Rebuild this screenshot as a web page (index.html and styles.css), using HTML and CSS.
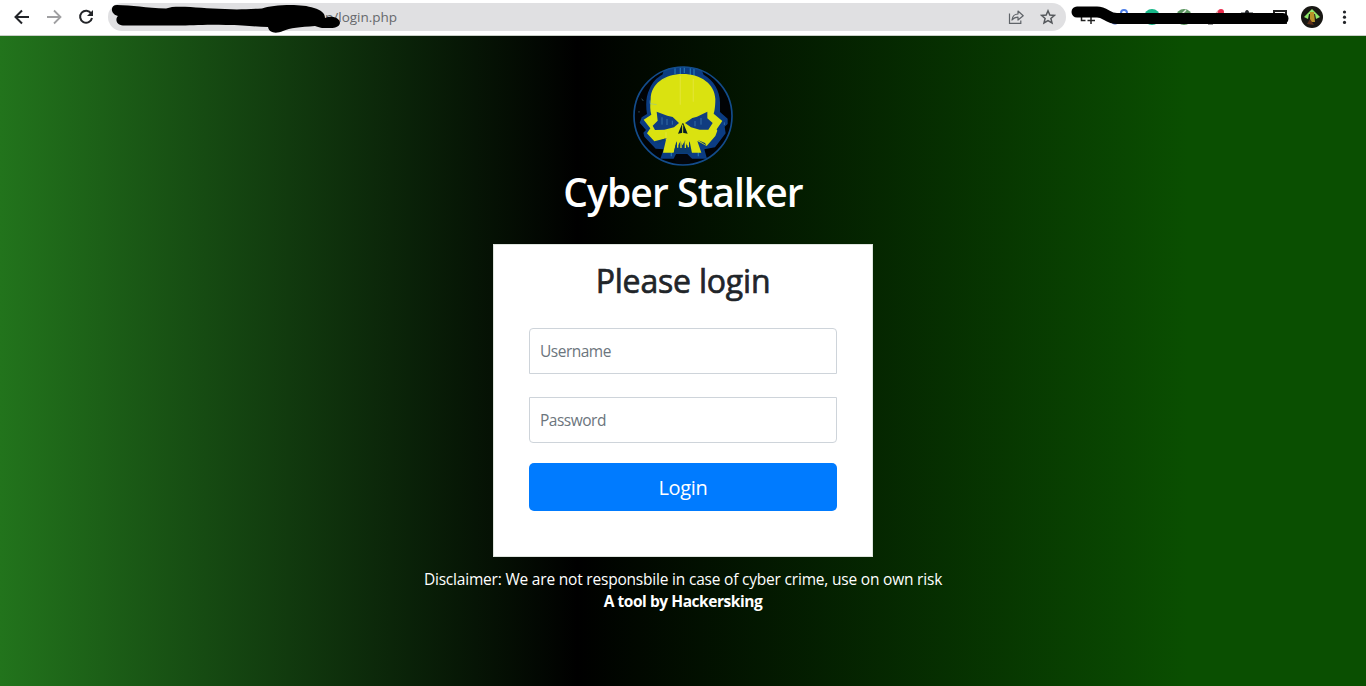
FILE: index.html
```html
<!DOCTYPE html>
<html lang="en">
<head>
<meta charset="utf-8">
<title>Cyber Stalker</title>
<link rel="stylesheet" href="styles.css">
</head>
<body>
<header class="toolbar">
  <nav class="nav">
    <svg width="16" height="16" viewBox="0 0 16 16"><path d="M15 8H2M8 1.5 1.5 8 8 14.5" fill="none" stroke="#222428" stroke-width="2"/></svg>
    <svg width="16" height="16" viewBox="0 0 16 16"><path d="M1 8h13M8 1.5 14.5 8 8 14.5" fill="none" stroke="#a0a0a2" stroke-width="1.8"/></svg>
    <svg width="16" height="16" viewBox="0 0 16 16"><path d="M13.2 4.5A6 6 0 1 0 14 9" fill="none" stroke="#222428" stroke-width="2"/><path d="M15 1v6H9z" fill="#222428"/></svg>
  </nav>
  <div class="address">
    <span class="url">n/login.php</span>
    <svg class="share" width="16" height="16" viewBox="0 0 16 16" fill="none" stroke="#5f6368" stroke-width="1.2"><path d="M1.5 4.5V14.3H12.8V11.5"/><path d="M4 11C4.5 7 7 5 10 5V2L15.2 6.8 10 11V8.2C7.5 8.2 5.6 9 4 11z" stroke-linejoin="round"/></svg>
    <svg width="16" height="16" viewBox="0 0 16 16"><path d="M8 1.8 9.8 6l4.6.4-3.5 3 1.1 4.5L8 11.5l-4 2.4 1.1-4.5-3.5-3L6.200 6z" fill="none" stroke="#55585c" stroke-width="1.5"/></svg>
  </div>
  <svg class="extensions" width="300" height="35" viewBox="1066 0 300 35">
    <path d="M1081.500 17v3.500h4M1091 16v8M1087.500 20.500h7.500" fill="none" stroke="#222" stroke-width="1.500"/>
    <circle cx="1124" cy="13" r="3" fill="none" stroke="#4c7ee8" stroke-width="2"/>
    <circle cx="1115" cy="21" r="3.500" fill="#3b5fc4"/>
    <circle cx="1152" cy="17" r="8" fill="#16b788"/>
    <circle cx="1184" cy="17" r="8" fill="#5b9660"/><path d="m1181 15 5-5" stroke="#e6eee4" stroke-width="1.500"/>
    <path d="m1214 15 4-5 3 2v4z" fill="#e8a0a4"/><circle cx="1221" cy="12" r="3" fill="#e92c4c"/><path d="M1208 24h5" stroke="#333"/>
    <path d="M1241 15v-2.500h4c0-3.500 4-3.500 4 0h4V15z" fill="#25282c"/>
    <path d="M1274 23V11h12v12z" fill="none" stroke="#222" stroke-width="2"/>
    <circle cx="1312" cy="17" r="11" fill="#181713"/>
    <path d="m1304 17 8-8 8 8-4 2-1-5h-6l-1 5z" fill="#8fea6c"/><path d="M1310 12h4l1 10h-5z" fill="#b89428"/><path d="m1307 24 3-5 4 6z" fill="#5c2f1a"/>
    <g fill="#222428"><circle cx="1344.500" cy="12" r="1.600"/><circle cx="1344.500" cy="17.200" r="1.600"/><circle cx="1344.500" cy="22.400" r="1.600"/></g>
  </svg>
  <svg class="marker" width="1366" height="36" viewBox="0 0 1366 36">
    <path d="M117 5C132 5 146 8 166 8.500L172 7C190 6 205 9 225 9C239 10 248 9 262 8.500C272 5 300 3 314 8C321 10 325 13 325 18C332 15 340 18 340 23C339 29 330 28 322 28C319 27 317 27 315 26C300 27 290 28 283 31C276 34 269 33 268 27C256 27 244 25 226 25C202 24 188 26 172 25.500H123C116 25 115 19 118 16C110 14 110 5 117 5Z"/>
    <path d="M1077 12h20c9 0 10 6.500 20 6.500h166" fill="none" stroke="#000" stroke-width="11" stroke-linecap="round"/>
  </svg>
</header>
<main class="page">
  <svg class="logo" width="100" height="100" viewBox="24 16 300 300">
    <defs><clipPath id="disc"><circle cx="174" cy="166" r="148"/></clipPath></defs>
    <circle cx="174" cy="166" r="147" fill="#010305"/>
    <g clip-path="url(#disc)">
      <path d="M122 14h102l12 28c30 16 50 50 49 86v26l23 20v16l-9 8 3 20-32 42-32 6 8 28H106l10-28-24-2-34-36-3-12 8-8-19-22 6-16 16-10c-4-24-4-54 8-76 8-20 22-34 38-42z" fill="#0b3c82"/>
      <path d="M146 294 153 280h34l14 14-12 18h-32z" fill="#02060c"/>
      <path d="M166 17v25M178 17v20M196 18v28M207 25v21M150 20v20M139 274v13M220 270v17" stroke="#2070ae" stroke-width="4"/>
    </g>
    <circle cx="174" cy="166" r="147" fill="none" stroke="#134c8b" stroke-width="5"/>
    <path d="M77 115C78 70 118 40 173 40s96 30 98 75c0 20-2 36-5 44l26 22-17 25 2 4-6 16-26 30-28-15 12 35h-33l-6-24-5 4-7-12-6 10-7-10-7 12-6-4-6 24h-32l10-43-36 9-22-24 10-15-20-26 23-15c-4-12-4-30-2-47z" fill="#dae210"/>
    <path d="M95 153 127 165 143 169 162 187 147 200 118 207 90 208 83 195 98 180zM247 153 216 168 202 172 180 187 198 200 224 207 250 207 263 187 247 173z" fill="#103c80"/>
    <path d="m172 188-13 31 14-3 15 3-13-31z" fill="#071e25"/>
    <path d="M173 192v27" stroke="#dae210" stroke-width="3"/>
    <path d="M127 231 99 249 94 243zM218 238 244 254 240 247zM146 278l8-36 7 19 6-21 6 19 7-20 7 20 7-17 7 36z" fill="#0b3b70"/>
    <path d="M158 247v14M168 242v20M181 242v20M190 247v13" stroke="#dae210" stroke-width="4"/>
    <path d="M166 45v87M205 54v69M123 215v22" stroke="#ece95c" stroke-width="4" opacity=".4"/>
    <path d="M75 119v10l20 3M111 170v22M126 175v18M142 180v12M210 181v16M228 172v20M50 114l5 7M42 151v5M298 185v8M115 57l8-4" fill="none" stroke="#68b4e0" stroke-width="3" opacity=".4"/>
  </svg>
  <h1 class="title">Cyber Stalker</h1>
  <form class="card">
    <h2 class="heading">Please login</h2>
    <input class="field field-top" type="text" placeholder="Username">
    <input class="field field-bottom" type="password" placeholder="Password">
    <button class="submit" type="button">Login</button>
  </form>
  <p class="disclaimer">Disclaimer: We are not responsbile in case of cyber crime, use on own risk</p>
  <p class="credit">A tool by Hackersking</p>
</main>
</body>
</html>
```
FILE: styles.css
```css
* { box-sizing: border-box; }
body {
  margin: 0;
  height: 686px;
  overflow: hidden;
  display: flex;
  flex-direction: column;
  font-family: "Open Sans", "Noto Sans", sans-serif;
}
svg { display: block; flex: none; }
.toolbar {
  position: relative;
  height: 36px;
  flex: none;
  display: flex;
  align-items: flex-start;
  background: #fff;
  border-bottom: 1px solid #c9d0c8;
}
.nav {
  width: 108px;
  flex: none;
  padding: 9px 0 0 14px;
  display: flex;
  gap: 16px;
}
.address {
  width: 958px;
  height: 28px;
  flex: none;
  margin-top: 3px;
  padding: 0 10px 0 217px;
  display: flex;
  align-items: center;
  gap: 16px;
  border-radius: 14px;
  background: #e0e0e2;
}
.url {
  flex: 1;
  color: #66696c;
  font-size: 13.5px;
  line-height: 28px;
}
.marker { position: absolute; left: 0; top: 0; }
.page {
  flex: 1;
  display: flex;
  flex-direction: column;
  align-items: center;
  padding-top: 30px;
  background: linear-gradient(90deg, #22741c 0%, #000 42.3%, #0a4f01 87%);
  color: #fff;
}
.title {
  margin: 2px 0 0;
  font-size: 39px;
  font-weight: 600;
  line-height: 48px;
  letter-spacing: -0.9px;
  white-space: nowrap;
}
.card {
  width: 380px;
  height: 313px;
  margin-top: 28px;
  padding: 17px 35px 0;
  display: flex;
  flex-direction: column;
  background: #fff;
  border: 1px solid #dfe5df;
}
.heading {
  margin: 0 0 28px;
  color: #212529;
  font-size: 32px;
  font-weight: 500;
  line-height: 38px;
  letter-spacing: -0.2px;
  text-align: center;
  -webkit-text-stroke: 0.7px #212529;
}
.field {
  width: 100%;
  height: 46px;
  margin: 0;
  padding: 10px;
  border: 1px solid #ced4da;
  background: #fff;
  font: 15.5px "Open Sans", "Noto Sans", sans-serif;
  letter-spacing: -0.5px;
}
.field::placeholder { color: #6c757d; opacity: 1; }
.field-top { border-radius: 4px 4px 0 0; margin-bottom: 23px; }
.field-bottom { border-radius: 0 0 4px 4px; margin-bottom: 20px; }
.submit {
  height: 48px;
  padding: 1px 0 0;
  border: 0;
  border-radius: 5px;
  background: #007bff;
  color: #fff;
  font: 20px/47px "Open Sans", "Noto Sans", sans-serif;
  letter-spacing: -0.3px;
}
.disclaimer, .credit {
  margin: 0;
  font-size: 15.5px;
  line-height: 22px;
  white-space: nowrap;
}
.disclaimer { margin-top: 11px; letter-spacing: -0.2px; }
.credit { font-weight: 700; letter-spacing: -0.45px; }
```
